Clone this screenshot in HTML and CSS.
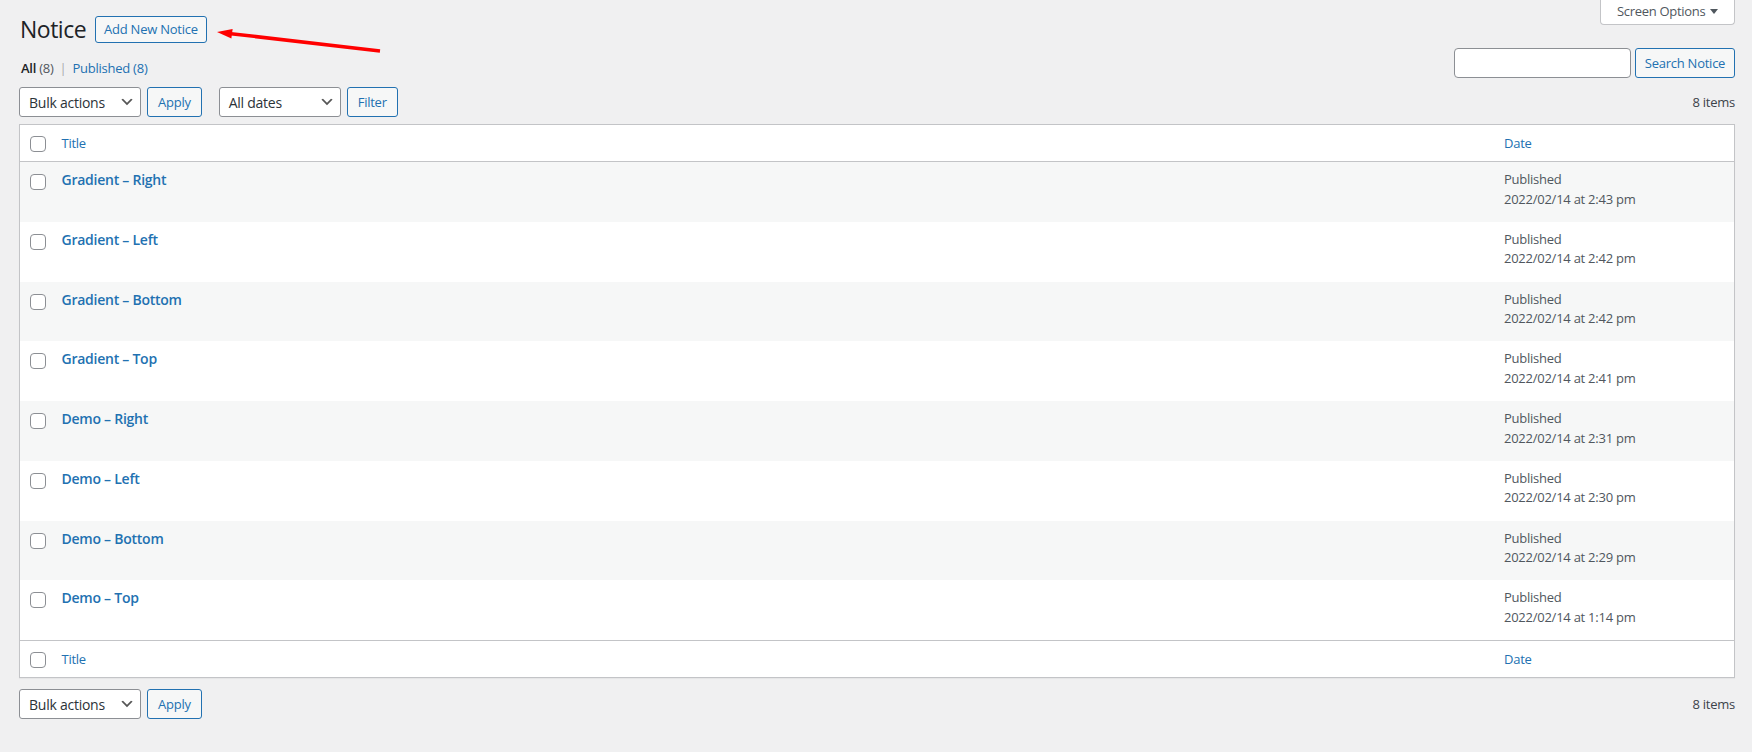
FILE: index.html
```html
<!DOCTYPE html>
<html lang="en">
<head>
    <meta charset="UTF-8">
    <meta name="viewport" content="width=device-width, initial-scale=1.0">
    <title>Notice</title>
    <link rel="stylesheet" href="styles.css">
</head>
<body>
    <svg class="callout-arrow" viewBox="0 0 400 60" width="400" height="60">
        <line x1="231" y1="33.7" x2="380" y2="51" stroke="#ff0000" stroke-width="3.5"/>
        <polygon points="217,32 232.6,29.1 231.4,38.4" fill="#ff0000"/>
    </svg>

    <div class="wrap">
        <div class="page-head">
            <div class="title-group">
                <h1>Notice</h1>
                <a class="page-title-action" href="#">Add New Notice</a>
            </div>
            <button class="screen-options" type="button">
                <span>Screen Options</span>
                <svg width="8" height="5" viewBox="0 0 8 5"><polygon points="0,0 8,0 4,5" fill="#50575e"/></svg>
            </button>
        </div>

        <div class="filter-row">
            <ul class="subsubsub">
                <li><span class="current">All</span> <span class="count">(8)</span></li>
                <li class="sep">|</li>
                <li><a href="#">Published <span class="count link-count">(8)</span></a></li>
            </ul>
            <div class="search-box">
                <input type="search" class="search-input">
                <button class="button search-button" type="button">Search Notice</button>
            </div>
        </div>

        <div class="tablenav top">
            <div class="actions">
                <div class="select bulk">
                    <span>Bulk actions</span>
                    <svg width="16" height="16" viewBox="0 0 20 20"><path d="M5 6l5 5 5-5 2 1-7 7-7-7 2-1z" fill="#555"/></svg>
                </div>
                <button class="button" type="button">Apply</button>
                <div class="select dates">
                    <span>All dates</span>
                    <svg width="16" height="16" viewBox="0 0 20 20"><path d="M5 6l5 5 5-5 2 1-7 7-7-7 2-1z" fill="#555"/></svg>
                </div>
                <button class="button" type="button">Filter</button>
            </div>
            <span class="displaying-num">8 items</span>
        </div>

        <table class="list-table">
            <thead>
                <tr>
                    <th class="check-column"><input type="checkbox"></th>
                    <th class="column-title"><a href="#">Title</a></th>
                    <th class="column-date"><a href="#">Date</a></th>
                </tr>
            </thead>
            <tbody>
                <tr>
                    <th class="check-column"><input type="checkbox"></th>
                    <td class="column-title"><a class="row-title" href="#">Gradient – Right</a></td>
                    <td class="column-date">Published<br>2022/02/14 at 2:43 pm</td>
                </tr>
                <tr>
                    <th class="check-column"><input type="checkbox"></th>
                    <td class="column-title"><a class="row-title" href="#">Gradient – Left</a></td>
                    <td class="column-date">Published<br>2022/02/14 at 2:42 pm</td>
                </tr>
                <tr>
                    <th class="check-column"><input type="checkbox"></th>
                    <td class="column-title"><a class="row-title" href="#">Gradient – Bottom</a></td>
                    <td class="column-date">Published<br>2022/02/14 at 2:42 pm</td>
                </tr>
                <tr>
                    <th class="check-column"><input type="checkbox"></th>
                    <td class="column-title"><a class="row-title" href="#">Gradient – Top</a></td>
                    <td class="column-date">Published<br>2022/02/14 at 2:41 pm</td>
                </tr>
                <tr>
                    <th class="check-column"><input type="checkbox"></th>
                    <td class="column-title"><a class="row-title" href="#">Demo – Right</a></td>
                    <td class="column-date">Published<br>2022/02/14 at 2:31 pm</td>
                </tr>
                <tr>
                    <th class="check-column"><input type="checkbox"></th>
                    <td class="column-title"><a class="row-title" href="#">Demo – Left</a></td>
                    <td class="column-date">Published<br>2022/02/14 at 2:30 pm</td>
                </tr>
                <tr>
                    <th class="check-column"><input type="checkbox"></th>
                    <td class="column-title"><a class="row-title" href="#">Demo – Bottom</a></td>
                    <td class="column-date">Published<br>2022/02/14 at 2:29 pm</td>
                </tr>
                <tr>
                    <th class="check-column"><input type="checkbox"></th>
                    <td class="column-title"><a class="row-title" href="#">Demo – Top</a></td>
                    <td class="column-date">Published<br>2022/02/14 at 1:14 pm</td>
                </tr>
            </tbody>
            <tfoot>
                <tr>
                    <th class="check-column"><input type="checkbox"></th>
                    <th class="column-title"><a href="#">Title</a></th>
                    <th class="column-date"><a href="#">Date</a></th>
                </tr>
            </tfoot>
        </table>

        <div class="tablenav bottom">
            <div class="actions">
                <div class="select bulk">
                    <span>Bulk actions</span>
                    <svg width="16" height="16" viewBox="0 0 20 20"><path d="M5 6l5 5 5-5 2 1-7 7-7-7 2-1z" fill="#555"/></svg>
                </div>
                <button class="button" type="button">Apply</button>
            </div>
            <span class="displaying-num">8 items</span>
        </div>
    </div>
</body>
</html>
```

FILE: styles.css
```css
body {
    font-family: "Open Sans", "Noto Sans", sans-serif;
    font-size: 13px;
    letter-spacing: -0.25px;
    background-color: #f0f0f1;
    color: #3c434a;
    margin: 0;
    padding: 0;
}

a {
    color: #2271b1;
    text-decoration: none;
}

.callout-arrow {
    position: absolute;
    left: 0;
    top: 0;
}

.wrap {
    padding: 0 17px 0 19px;
}

.page-head {
    display: flex;
    justify-content: space-between;
    align-items: flex-start;
}

.title-group {
    display: flex;
    align-items: center;
    padding-top: 16px;
}

h1 {
    font-size: 23px;
    font-weight: 400;
    line-height: 27px;
    letter-spacing: -0.5px;
    margin: 0 9px 0 1px;
    color: #1d2327;
}

.page-title-action {
    display: inline-block;
    box-sizing: border-box;
    height: 27px;
    line-height: 25px;
    padding: 0 8px;
    border: 1px solid #2271b1;
    border-radius: 3px;
    background-color: #f6f7f7;
    font-weight: 500;
    white-space: nowrap;
}

.screen-options {
    display: flex;
    align-items: center;
    justify-content: space-between;
    height: 25px;
    width: 135px;
    box-sizing: border-box;
    padding: 0 16px 2px 16px;
    background-color: #fff;
    border: 1px solid #c3c4c7;
    border-top: none;
    border-radius: 0 0 4px 4px;
    font-family: inherit;
    font-size: 13px;
    letter-spacing: -0.3px;
    color: #50575e;
    white-space: nowrap;
}

.filter-row {
    display: flex;
    justify-content: space-between;
    align-items: flex-end;
    margin-top: 5px;
}

.subsubsub {
    list-style: none;
    margin: 0;
    padding: 0 0 0 2px;
    display: flex;
    gap: 6px;
    line-height: 19px;
    color: #50575e;
}

    .subsubsub .current {
        color: #1d2327;
        font-weight: 600;
    }

    .subsubsub .sep {
        color: #a7aaad;
    }

    .subsubsub .link-count {
        color: #2271b1;
    }

.search-box {
    display: flex;
    gap: 4px;
}

.search-input {
    box-sizing: border-box;
    width: 177px;
    height: 30px;
    margin: 0;
    border: 1px solid #8c8f94;
    border-radius: 4px;
    background-color: #fff;
}

.button {
    box-sizing: border-box;
    height: 30px;
    padding: 0 10px;
    margin: 0;
    border: 1px solid #2271b1;
    border-radius: 3px;
    background-color: #f6f7f7;
    color: #2271b1;
    font-family: inherit;
    font-size: 13px;
    letter-spacing: inherit;
    line-height: 28px;
    white-space: nowrap;
}

.search-button {
    width: 100px;
    padding: 0;
}

.tablenav {
    display: flex;
    justify-content: space-between;
    align-items: center;
    height: 30px;
}

    .tablenav.top {
        margin-top: 9px;
        margin-bottom: 7px;
    }

    .tablenav.bottom {
        margin-top: 11px;
    }

.actions {
    display: flex;
    gap: 6px;
}

    .actions .dates {
        margin-left: 11px;
    }

.select {
    box-sizing: border-box;
    display: flex;
    justify-content: space-between;
    align-items: center;
    width: 122px;
    height: 30px;
    padding: 0 5px 0 9px;
    border: 1px solid #8c8f94;
    border-radius: 3px;
    background-color: #fff;
    color: #2c3338;
    font-size: 14px;
}

.displaying-num {
    color: #3c434a;
}

.list-table {
    width: 100%;
    border-collapse: collapse;
    border: 1px solid #c3c4c7;
    background-color: #fff;
    box-shadow: 0 1px 1px rgba(0, 0, 0, 0.04);
}

    .list-table th,
    .list-table td {
        text-align: left;
        vertical-align: top;
        font-weight: 400;
    }

    .list-table thead th,
    .list-table tfoot th {
        padding: 8px 10px;
        line-height: 20px;
    }

    .list-table thead tr {
        border-bottom: 1px solid #c3c4c7;
    }

    .list-table tfoot tr {
        border-top: 1px solid #c3c4c7;
    }

    .list-table .check-column {
        width: 32px;
        padding: 11px 0 0 10px;
        box-sizing: border-box;
    }

    .list-table tbody .check-column {
        padding-top: 12px;
    }

    .list-table .column-date {
        width: 220px;
    }

    .list-table tbody td {
        padding: 8px 10px 12.75px;
        line-height: 19.5px;
        color: #50575e;
    }

    .list-table tbody tr:nth-child(odd) {
        background-color: #f6f7f7;
    }

.row-title {
    font-size: 14px;
    font-weight: 600;
}

input[type="checkbox"] {
    appearance: none;
    display: block;
    width: 16px;
    height: 16px;
    margin: 0;
    border: 1px solid #8c8f94;
    border-radius: 4px;
    background-color: #fff;
}
```
